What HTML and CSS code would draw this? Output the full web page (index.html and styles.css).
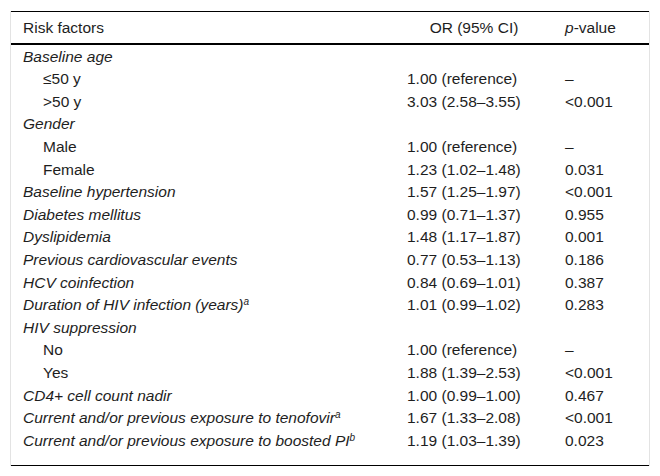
FILE: index.html
```html
<!DOCTYPE html>
<html lang="en">
<head>
<meta charset="utf-8">
<title>Risk factors</title>
<link rel="stylesheet" href="styles.css">
</head>
<body>
<div class="wrap">
<table class="risk">
<colgroup>
<col class="c1"><col class="c2"><col class="c3">
</colgroup>
<thead>
<tr><th class="lbl">Risk factors</th><th class="or">OR (95% CI)</th><th class="pv"><i>p</i>-value</th></tr>
</thead>
<tbody>
<tr><td class="cat">Baseline age</td><td></td><td></td></tr>
<tr><td class="sub">≤50 y</td><td>1.00 (reference)</td><td>–</td></tr>
<tr><td class="sub">&gt;50 y</td><td>3.03 (2.58–3.55)</td><td>&lt;0.001</td></tr>
<tr><td class="cat">Gender</td><td></td><td></td></tr>
<tr><td class="sub">Male</td><td>1.00 (reference)</td><td>–</td></tr>
<tr><td class="sub">Female</td><td>1.23 (1.02–1.48)</td><td>0.031</td></tr>
<tr><td class="cat">Baseline hypertension</td><td>1.57 (1.25–1.97)</td><td>&lt;0.001</td></tr>
<tr><td class="cat">Diabetes mellitus</td><td>0.99 (0.71–1.37)</td><td>0.955</td></tr>
<tr><td class="cat">Dyslipidemia</td><td>1.48 (1.17–1.87)</td><td>0.001</td></tr>
<tr><td class="cat">Previous cardiovascular events</td><td>0.77 (0.53–1.13)</td><td>0.186</td></tr>
<tr><td class="cat">HCV coinfection</td><td>0.84 (0.69–1.01)</td><td>0.387</td></tr>
<tr><td class="cat">Duration of HIV infection (years)<sup>a</sup></td><td>1.01 (0.99–1.02)</td><td>0.283</td></tr>
<tr><td class="cat">HIV suppression</td><td></td><td></td></tr>
<tr><td class="sub">No</td><td>1.00 (reference)</td><td>–</td></tr>
<tr><td class="sub">Yes</td><td>1.88 (1.39–2.53)</td><td>&lt;0.001</td></tr>
<tr><td class="cat">CD4+ cell count nadir</td><td>1.00 (0.99–1.00)</td><td>0.467</td></tr>
<tr><td class="cat">Current and/or previous exposure to tenofovir<sup>a</sup></td><td>1.67 (1.33–2.08)</td><td>&lt;0.001</td></tr>
<tr class="last"><td class="cat">Current and/or previous exposure to boosted PI<sup>b</sup></td><td>1.19 (1.03–1.39)</td><td>0.023</td></tr>
</tbody>
</table>
</div>
</body>
</html>
```
FILE: styles.css
```css
html, body {
  margin: 0;
  padding: 0;
  background: #fff;
}
body {
  font-family: "Liberation Sans", Arial, sans-serif;
  font-size: 15.5px;
  color: #1e1e1e;
}
.wrap {
  margin: 11px 0 0 10px;
  width: 638px;
  border-left: 1px solid #e3e3e3;
  border-right: 1px solid #e3e3e3;
}
.risk {
  width: 638px;
  border-collapse: collapse;
  table-layout: fixed;
  border-top: 1px solid #000;
  border-bottom: 1px solid #000;
}
.c1 { width: 384px; }
.c2 { width: 158px; }
.c3 { width: 96px; }
.risk th,
.risk td {
  padding: 0 12px;
  line-height: 22.6px;
  font-weight: normal;
  text-align: left;
  vertical-align: middle;
  white-space: nowrap;
}
.risk thead th {
  padding-top: 5px;
  padding-bottom: 3px;
  border-bottom: 2px solid #000;
}
.risk th.or {
  text-align: center;
}
.risk tbody tr:first-child td {
  padding-top: 1px;
}
.cat {
  font-style: italic;
}
.risk td.sub {
  padding-left: 32px;
}
sup {
  font-size: 10px;
  line-height: 0;
  vertical-align: 5px;
}
.risk tr.last td {
  padding-bottom: 13px;
}
```
